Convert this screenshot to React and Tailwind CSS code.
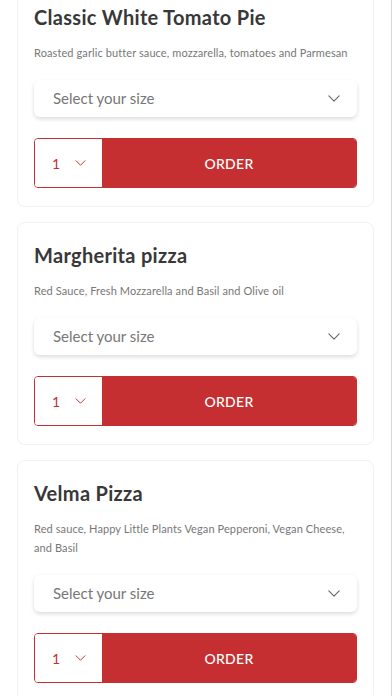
import React from "react";

const items = [
  {
    title: "Classic White Tomato Pie",
    desc: "Roasted garlic butter sauce, mozzarella, tomatoes and Parmesan",
  },
  {
    title: "Margherita pizza",
    desc: "Red Sauce, Fresh Mozzarella and Basil and Olive oil",
  },
  {
    title: "Velma Pizza",
    desc: "Red sauce, Happy Little Plants Vegan Pepperoni, Vegan Cheese, and Basil",
  },
];

function Chevron({ className }) {
  return (
    <svg viewBox="0 0 14 8" className={className} fill="none" stroke="currentColor" strokeWidth="1.3" strokeLinecap="round" strokeLinejoin="round">
      <path d="M1 1l6 6 6-6" />
    </svg>
  );
}

function Card({ title, desc }) {
  return (
    <div className="rounded-[8px] border border-[#f1f1f1] bg-white px-[16px] pt-[20px] pb-[18px]">
      <h2 className="text-[20px] leading-[24px] font-bold text-[#383838] tracking-[0.3px]">{title}</h2>
      <p className="mt-[14px] text-[11px] leading-[19px] text-[#777] tracking-[0.1px]">{desc}</p>
      <div className="mt-[18px] h-[37px] rounded-[6px] bg-white shadow-[0_2px_4px_rgba(0,0,0,0.14)] flex items-center justify-between pl-[19px] pr-[17px]">
        <span className="text-[15px] text-[#777]">Select your size</span>
        <Chevron className="w-[12px] h-[7px] text-[#666]" />
      </div>
      <div className="mt-[21px] h-[50px] flex rounded-[4px] overflow-hidden border border-[#c62f31]">
        <div className="w-[67px] bg-white flex items-center pl-[17px] gap-[15px] text-[#c62f31]">
          <span className="text-[14px]">1</span>
          <Chevron className="w-[11px] h-[6px]" />
        </div>
        <div className="flex-1 bg-[#c62f31] flex items-center justify-center text-white text-[14px] font-medium tracking-[0.3px]">
          ORDER
        </div>
      </div>
    </div>
  );
}

export default function App() {
  return (
    <div
      className="h-[696px] w-[392px] overflow-hidden bg-white border-r border-[#d8d8d8]"
      style={{ fontFamily: "Lato, 'Noto Sans', sans-serif" }}
    >
      <div className="-mt-[16px] pl-[17px] pr-[17px] flex flex-col gap-[15px]">
        {items.map((it) => (
          <Card key={it.title} {...it} />
        ))}
      </div>
    </div>
  );
}
